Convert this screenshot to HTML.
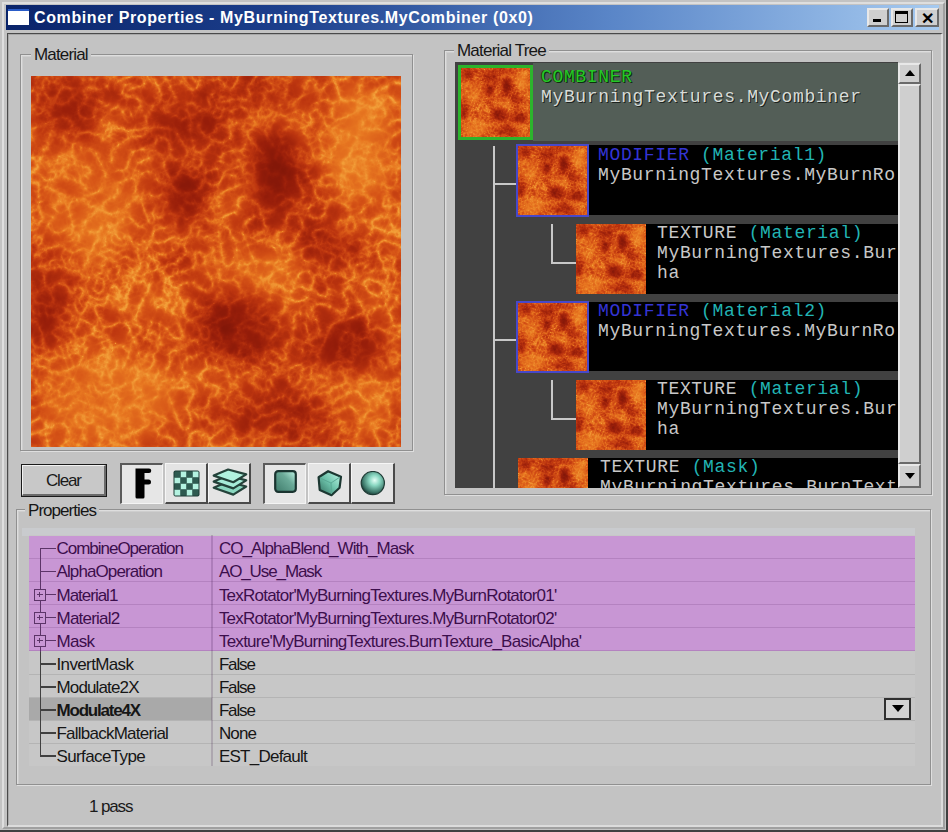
<!DOCTYPE html>
<html><head><meta charset="utf-8">
<style>
*{margin:0;padding:0;box-sizing:border-box}
html,body{width:948px;height:832px;overflow:hidden;background:#c3c3c3;font-family:"Liberation Sans",sans-serif}
.a{position:absolute}
.t{position:absolute;white-space:nowrap;font-size:17px;line-height:19px;color:#1a1a1a}
.grp{position:absolute;border:1px solid #909090;box-shadow:1px 1px 0 0 #dedede, inset 1px 1px 0 0 #dedede, inset 2px 2px 0 0 #cecece}
.lbl{position:absolute;white-space:nowrap;font-size:17px;line-height:19px;color:#161616;background:#c3c3c3;padding:0 3px}
.raised{position:absolute;background:#cfcfcf;border-top:2px solid #e8e8e8;border-left:2px solid #e8e8e8;border-right:2px solid #6a6a6a;border-bottom:2px solid #6a6a6a}
.pressed{position:absolute;background:#e6e6e6;border-top:2px solid #6a6a6a;border-left:2px solid #6a6a6a;border-right:2px solid #f2f2f2;border-bottom:2px solid #f2f2f2}
.mono{position:absolute;white-space:nowrap;font-family:"Liberation Mono",monospace;font-size:18px;line-height:20px;letter-spacing:0.65px;color:#c8c8c8}
</style></head>
<body>
<svg width="0" height="0" style="position:absolute">
<defs>
<filter id="noise" x="0" y="0" width="100%" height="100%" color-interpolation-filters="sRGB">
  <feTurbulence type="fractalNoise" baseFrequency="0.018" numOctaves="4" seed="4" result="n1"/>
  <feColorMatrix in="n1" type="matrix" values="1 0 0 0 0  1 0 0 0 0  1 0 0 0 0  0 0 0 0 1" result="a"/>
  <feTurbulence type="turbulence" baseFrequency="0.06" numOctaves="4" seed="9" result="n2"/>
  <feColorMatrix in="n2" type="matrix" values="-1 0 0 0 1  -1 0 0 0 1  -1 0 0 0 1  0 0 0 0 1"/>
  <feComponentTransfer result="b"><feFuncR type="gamma" exponent="3.5"/><feFuncG type="gamma" exponent="3.5"/><feFuncB type="gamma" exponent="3.5"/></feComponentTransfer>
  <feComposite in="a" in2="b" operator="arithmetic" k1="0" k2="0.3" k3="0.38" k4="0.32" result="c"/>
  <feColorMatrix in="c" type="matrix" values="1.8 0 0 0 -0.43  1.8 0 0 0 -0.43  1.8 0 0 0 -0.43  0 0 0 0 1"/>
</filter>
<filter id="ramp" color-interpolation-filters="sRGB">
  <feComponentTransfer>
    <feFuncR type="table" tableValues="0.45 0.60 0.74 0.84 0.91 0.95"/>
    <feFuncG type="table" tableValues="0.07 0.12 0.21 0.33 0.47 0.62"/>
    <feFuncB type="table" tableValues="0.03 0.04 0.06 0.09 0.13 0.22"/>
  </feComponentTransfer>
</filter>
<filter id="blur" x="-50%" y="-50%" width="200%" height="200%"><feGaussianBlur stdDeviation="12"/></filter>
<symbol id="tex" viewBox="0 0 370 370">
  <g transform="rotate(23 185 185)"><rect x="-90" y="-90" width="550" height="550" filter="url(#noise)"/></g>
  <g filter="url(#blur)" fill="#000">
    <ellipse cx="35" cy="32" rx="35" ry="28" opacity="0.60"/>
    <ellipse cx="155" cy="47" rx="45" ry="28" opacity="0.54"/>
    <ellipse cx="246" cy="18" rx="45" ry="16" opacity="0.42"/>
    <ellipse cx="153" cy="120" rx="22" ry="36" opacity="0.72"/>
    <ellipse cx="244" cy="95" rx="28" ry="46" opacity="0.84"/>
    <ellipse cx="302" cy="168" rx="30" ry="18" opacity="0.66"/>
    <ellipse cx="15" cy="236" rx="20" ry="40" opacity="0.72"/>
    <ellipse cx="206" cy="249" rx="45" ry="38" opacity="0.66"/>
    <ellipse cx="318" cy="272" rx="45" ry="25" opacity="0.66"/>
    <ellipse cx="242" cy="338" rx="70" ry="28" opacity="0.42"/>
  </g>
  <g filter="url(#blur)" fill="#fff">
    <ellipse cx="330" cy="70" rx="38" ry="60" opacity="0.54"/>
    <ellipse cx="60" cy="130" rx="55" ry="65" opacity="0.36"/>
    <ellipse cx="80" cy="322" rx="75" ry="45" opacity="0.48"/>
    <ellipse cx="216" cy="188" rx="55" ry="22" opacity="0.30"/>
    <ellipse cx="346" cy="332" rx="25" ry="35" opacity="0.36"/>
  </g>
</symbol>
<filter id="noise2" x="0" y="0" width="100%" height="100%" color-interpolation-filters="sRGB">
  <feTurbulence type="fractalNoise" baseFrequency="0.02" numOctaves="4" seed="21" result="n1"/>
  <feColorMatrix in="n1" type="matrix" values="1.7 0 0 0 -0.32  1.7 0 0 0 -0.32  1.7 0 0 0 -0.32  0 0 0 0 1"/>
</filter>
<symbol id="tex2" viewBox="0 0 370 370">
  <rect width="370" height="370" filter="url(#noise2)"/>
</symbol>
</defs>
</svg>

<!-- window frame -->
<div class="a" style="left:0;top:0;width:948px;height:832px;border-right:2px solid #404040;border-bottom:2px solid #404040;"></div>
<div class="a" style="left:2px;top:2px;width:943px;height:827px;border-right:2px solid #a0a0a0;border-bottom:2px solid #a0a0a0;border-left:2px solid #dedede;border-top:2px solid #dedede"></div>
<!-- title bar -->
<div class="a" style="left:6px;top:5px;width:933px;height:25px;background:linear-gradient(90deg,#0a246a 0%,#1c3f8c 30%,#5a86c8 65%,#a6caf0 100%)"></div>
<div class="a" style="left:8px;top:9px;width:21px;height:16px;background:#fff;border-top:2px solid #2a5cc8"></div>
<div class="t" style="left:34px;top:9px;font-weight:bold;font-size:16px;line-height:17px;color:#fff;letter-spacing:0.62px">Combiner Properties - MyBurningTextures.MyCombiner (0x0)</div>
<!-- title buttons -->
<div class="raised" style="left:867px;top:8px;width:22px;height:19px;"><div class="a" style="left:4px;top:9px;width:8px;height:3px;background:#000"></div></div>
<div class="raised" style="left:891px;top:8px;width:22px;height:19px;"><div class="a" style="left:2px;top:1px;width:13px;height:12px;border:1.5px solid #000;border-top-width:3px"></div></div>
<div class="raised" style="left:915px;top:8px;width:24px;height:19px;"><div class="a" style="left:4px;top:1px;font:bold 16px/16px 'Liberation Sans';color:#000">&#x2715;</div></div>

<!-- client sunken border -->
<div class="a" style="left:7px;top:33px;width:936px;height:794px;border-top:1px solid #4a4a4a;border-left:1px solid #4a4a4a;border-right:2px solid #dcdcdc;border-bottom:2px solid #dcdcdc;box-shadow:inset 1px 1px 0 #a8a8a8"></div>

<!-- Material group -->
<div class="grp" style="left:20px;top:54px;width:393px;height:397px"></div>
<div class="lbl" style="left:31px;top:45px;letter-spacing:-0.85px">Material</div>
<div class="a" style="left:31px;top:76px;width:370px;height:371px;filter:url(#ramp)"><svg width="370" height="371" style="display:block"><use href="#tex" width="370" height="371"/></svg></div>

<!-- Material Tree group -->
<div class="grp" style="left:444px;top:50px;width:488px;height:445px"></div>
<div class="lbl" style="left:454px;top:41px;letter-spacing:-0.79px">Material Tree</div>
<div class="a" id="tree" style="left:455px;top:62px;width:466px;height:426px;background:#414141;overflow:hidden">
<div class="a" style="left:78px;top:1px;width:365px;height:78px;background:#535e57"></div>
<div class="a" style="left:3px;top:3px;width:75px;height:75px;border:3px solid #2cb42c;overflow:hidden"><div class="a" style="left:0;top:0;width:69px;height:69px;filter:url(#ramp) blur(0.6px)"><svg width="69" height="69" style="display:block"><use href="#tex" width="69" height="69"/></svg></div></div>
<div class="mono" style="left:86px;top:5px;text-shadow:1px 1px 0 #1c221e;color:#d8dcd8"><span style="color:#26c826;text-shadow:1px 1px 0 #0c300c,-1px 0 0 #1a3a1a">COMBINER</span><br>MyBurningTextures.MyCombiner</div>
<div class="a" style="left:38px;top:84px;width:2px;height:342px;background:#c8c8c8"></div>
<div class="a" style="left:40px;top:121px;width:21px;height:2px;background:#c8c8c8"></div>
<div class="a" style="left:134px;top:83px;width:309px;height:70px;background:#000"></div>
<div class="a" style="left:61px;top:82px;width:73px;height:73px;border:2px solid #4848c8;overflow:hidden"><div class="a" style="left:0;top:0;width:69px;height:69px;filter:url(#ramp) blur(0.6px)"><svg width="69" height="69" style="display:block"><use href="#tex" width="69" height="69"/></svg></div></div>
<div class="mono" style="left:143px;top:83px;"><span style="color:#3434d4">MODIFIER</span> <span style="color:#22b4b4">(Material1)</span><br>MyBurningTextures.MyBurnRo</div>
<div class="a" style="left:96px;top:162px;width:2px;height:40px;background:#c8c8c8"></div>
<div class="a" style="left:98px;top:200px;width:23px;height:2px;background:#c8c8c8"></div>
<div class="a" style="left:191px;top:162px;width:252px;height:70px;background:#000"></div>
<div class="a" style="left:121px;top:162px;width:70px;height:70px;overflow:hidden"><div class="a" style="left:0;top:0;width:70px;height:70px;filter:url(#ramp) blur(0.6px)"><svg width="70" height="70" style="display:block"><use href="#tex" width="70" height="70"/></svg></div></div>
<div class="mono" style="left:202px;top:161px;">TEXTURE <span style="color:#22b4b4">(Material)</span><br>MyBurningTextures.Bur<br>ha</div>
<div class="a" style="left:40px;top:277px;width:21px;height:2px;background:#c8c8c8"></div>
<div class="a" style="left:134px;top:240px;width:309px;height:69px;background:#000"></div>
<div class="a" style="left:61px;top:239px;width:73px;height:72px;border:2px solid #4848c8;overflow:hidden"><div class="a" style="left:0;top:0;width:69px;height:68px;filter:url(#ramp) blur(0.6px)"><svg width="69" height="68" style="display:block"><use href="#tex" width="69" height="68"/></svg></div></div>
<div class="mono" style="left:143px;top:239px;"><span style="color:#3434d4">MODIFIER</span> <span style="color:#22b4b4">(Material2)</span><br>MyBurningTextures.MyBurnRo</div>
<div class="a" style="left:96px;top:318px;width:2px;height:40px;background:#c8c8c8"></div>
<div class="a" style="left:98px;top:356px;width:23px;height:2px;background:#c8c8c8"></div>
<div class="a" style="left:191px;top:318px;width:252px;height:70px;background:#000"></div>
<div class="a" style="left:121px;top:318px;width:70px;height:70px;overflow:hidden"><div class="a" style="left:0;top:0;width:70px;height:70px;filter:url(#ramp) blur(0.6px)"><svg width="70" height="70" style="display:block"><use href="#tex" width="70" height="70"/></svg></div></div>
<div class="mono" style="left:202px;top:317px;">TEXTURE <span style="color:#22b4b4">(Material)</span><br>MyBurningTextures.Bur<br>ha</div>
<div class="a" style="left:133px;top:396px;width:310px;height:72px;background:#000"></div>
<div class="a" style="left:63px;top:396px;width:70px;height:70px;overflow:hidden"><div class="a" style="left:0;top:0;width:70px;height:70px;filter:url(#ramp) blur(0.6px)"><svg width="70" height="70" style="display:block"><use href="#tex" width="70" height="70"/></svg></div></div>
<div class="mono" style="left:145px;top:395px;">TEXTURE <span style="color:#22b4b4">(Mask)</span><br>MyBurningTextures.BurnText</div>
<div class="a" style="left:443px;top:0px;width:23px;height:426px;background:#c8c8c8"></div>
<div class="raised" style="left:443px;top:1px;width:23px;height:21px"><div class="a" style="left:5px;top:5px;width:0;height:0;border-left:5px solid transparent;border-right:5px solid transparent;border-bottom:6px solid #000"></div></div>
<div class="raised" style="left:443px;top:22px;width:23px;height:380px"></div>
<div class="raised" style="left:443px;top:402px;width:23px;height:24px"><div class="a" style="left:5px;top:7px;width:0;height:0;border-left:5px solid transparent;border-right:5px solid transparent;border-top:6px solid #000"></div></div>
</div>

<!-- Buttons row -->
<div class="a" style="left:21px;top:464px;width:86px;height:33px;border:1px solid #1a1a1a;background:#c8c8c8">
  <div class="a" style="left:0;top:0;width:84px;height:31px;border-top:1px solid #f2f2f2;border-left:1px solid #f2f2f2;border-right:2px solid #6a6a6a;border-bottom:2px solid #6a6a6a"></div>
</div>
<div class="t" style="left:46px;top:471px;letter-spacing:-1.16px">Clear</div>
<!-- toolbar buttons -->
<div class="a" style="left:120px;top:463px;width:43px;height:41px;background:#e6e6e6;border-top:2px solid #5a5a5a;border-left:2px solid #5a5a5a;border-right:1px solid #f4f4f4;border-bottom:1px solid #f4f4f4"></div>
<svg class="a" style="left:134px;top:467px" width="18" height="33"><path d="M1.5 1.5 H15 a1.5 1.5 0 0 1 0 4.5 H10.5 V12.5 H14.5 a1.5 1.5 0 0 1 0 5 H10.5 V30 a1.5 1.5 0 0 1 -1.5 1.5 H3 a1.5 1.5 0 0 1 -1.5 -1.5 Z" fill="#000"/></svg>

<div class="a" style="left:165px;top:463px;width:43px;height:41px;background:#e4e4e4;border-top:1px solid #f6f6f6;border-left:1px solid #f6f6f6;border-right:2px solid #4a4a4a;border-bottom:2px solid #4a4a4a"></div>
<svg class="a" style="left:173px;top:470px" width="27" height="27" viewBox="0 0 27 27">
<rect x="0.5" y="0.5" width="26" height="26" rx="2" fill="#1c3a34"/>
<g fill="#b4f2e0"><rect x="7.5" y="1.5" width="6" height="6"/><rect x="19.5" y="1.5" width="6" height="6"/><rect x="1.5" y="7.5" width="6" height="6"/><rect x="13.5" y="7.5" width="6" height="6"/><rect x="7.5" y="13.5" width="6" height="6"/><rect x="19.5" y="13.5" width="6" height="6"/><rect x="1.5" y="19.5" width="6" height="6"/><rect x="13.5" y="19.5" width="6" height="6"/></g>
<g fill="#2e5a50"><rect x="1.5" y="1.5" width="6" height="6"/><rect x="13.5" y="1.5" width="6" height="6"/><rect x="7.5" y="7.5" width="6" height="6"/><rect x="19.5" y="7.5" width="6" height="6"/><rect x="1.5" y="13.5" width="6" height="6"/><rect x="13.5" y="13.5" width="6" height="6"/><rect x="7.5" y="19.5" width="6" height="6"/><rect x="19.5" y="19.5" width="6" height="6"/></g>
</svg>

<div class="a" style="left:208px;top:463px;width:43px;height:41px;background:#e4e4e4;border-top:1px solid #f6f6f6;border-left:1px solid #f6f6f6;border-right:2px solid #4a4a4a;border-bottom:2px solid #4a4a4a"></div>
<svg class="a" style="left:208px;top:463px" width="43" height="41" viewBox="208 463 43 41">
<g stroke="#24423a" stroke-width="2.2" stroke-linejoin="round">
<path d="M213.7 487.7 L228.1 481.6 L246.2 486.5 L233.3 494.6 Z" fill="#8ad8c0"/>
<path d="M213.7 481.6 L228.1 475.5 L246.2 480.4 L233.3 488.4 Z" fill="#a6ecd8"/>
<path d="M213.7 475.6 L228.1 469.5 L246.2 474.4 L233.3 482.2 Z" fill="#b0f2de"/>
</g>
</svg>

<div class="a" style="left:263px;top:463px;width:43px;height:41px;background:#e6e6e6;border-top:2px solid #5a5a5a;border-left:2px solid #5a5a5a;border-right:1px solid #f4f4f4;border-bottom:1px solid #f4f4f4"></div>
<svg class="a" style="left:274px;top:470px" width="23" height="23" viewBox="0 0 23 23">
<defs><linearGradient id="gsq" x1="0" y1="1" x2="1" y2="0"><stop offset="0" stop-color="#3e7a6a"/><stop offset="0.6" stop-color="#6aaa98"/><stop offset="1" stop-color="#c0f6e6"/></linearGradient></defs>
<rect x="1.2" y="1.2" width="20.6" height="20.6" rx="3" fill="url(#gsq)" stroke="#1a3430" stroke-width="2.2"/>
</svg>

<div class="a" style="left:308px;top:463px;width:43px;height:41px;background:#e4e4e4;border-top:1px solid #f6f6f6;border-left:1px solid #f6f6f6;border-right:2px solid #4a4a4a;border-bottom:2px solid #4a4a4a"></div>
<svg class="a" style="left:308px;top:463px" width="43" height="41" viewBox="308 463 43 41">
<defs><linearGradient id="gcb" x1="0" y1="1" x2="1" y2="0"><stop offset="0" stop-color="#2e6a5a"/><stop offset="0.5" stop-color="#6ec4ac"/><stop offset="1" stop-color="#c4faea"/></linearGradient></defs>
<path d="M328.1 471.2 L341 476.7 L339.6 487.7 L331.5 495.2 L319.7 490 L318.6 477.3 Z" fill="url(#gcb)" stroke="#1c3832" stroke-width="2.2" stroke-linejoin="round"/>
<path d="M320 478 L331 483 L340 477 M331 483 L331.5 494" fill="none" stroke="#5aa894" stroke-width="1"/>
</svg>

<div class="a" style="left:351px;top:463px;width:44px;height:41px;background:#e4e4e4;border-top:1px solid #f6f6f6;border-left:1px solid #f6f6f6;border-right:2px solid #4a4a4a;border-bottom:2px solid #4a4a4a"></div>
<svg class="a" style="left:360px;top:471px" width="26" height="26" viewBox="0 0 26 26">
<defs><radialGradient id="gsp" cx="0.58" cy="0.38" r="0.65"><stop offset="0" stop-color="#e4fff6"/><stop offset="0.35" stop-color="#8ad8c2"/><stop offset="0.8" stop-color="#3a7466"/><stop offset="1" stop-color="#1a3430"/></radialGradient></defs>
<circle cx="12.8" cy="12.1" r="11.6" fill="url(#gsp)" stroke="#1e3a34" stroke-width="1.2"/>
</svg>

<!-- Properties group -->
<div class="grp" style="left:16px;top:509px;width:915px;height:276px"></div>
<div class="lbl" style="left:25px;top:501px;letter-spacing:-0.95px">Properties</div>
<div class="a" style="left:22px;top:528px;width:893px;height:8px;background:#c9cbce"></div>
<div class="a" id="grid" style="left:29px;top:535px;width:886px;height:231px;background:#c7c7c7;overflow:hidden">
<div class="a" style="left:0;top:1.0px;width:886px;height:23.1px;background:#c896d4;border-bottom:1.5px solid #b482c0"></div>
<div class="a" style="left:0;top:24.1px;width:886px;height:23.1px;background:#c896d4;border-bottom:1.5px solid #b482c0"></div>
<div class="a" style="left:0;top:47.2px;width:886px;height:23.1px;background:#c896d4;border-bottom:1.5px solid #b482c0"></div>
<div class="a" style="left:0;top:70.3px;width:886px;height:23.1px;background:#c896d4;border-bottom:1.5px solid #b482c0"></div>
<div class="a" style="left:0;top:93.4px;width:886px;height:23.1px;background:#c896d4;border-bottom:1.5px solid #b482c0"></div>
<div class="a" style="left:0;top:116.5px;width:886px;height:23.1px;background:#c7c7c7;border-bottom:1.5px solid #b4b4b4"></div>
<div class="a" style="left:0;top:139.6px;width:886px;height:23.1px;background:#c7c7c7;border-bottom:1.5px solid #b4b4b4"></div>
<div class="a" style="left:0;top:162.7px;width:886px;height:23.1px;background:#c7c7c7;border-bottom:1.5px solid #b4b4b4"></div>
<div class="a" style="left:0;top:162.7px;width:183px;height:23.1px;background:#a9a9a9;border-bottom:1.5px solid #b4b4b4"></div>
<div class="a" style="left:0;top:185.8px;width:886px;height:23.1px;background:#c7c7c7;border-bottom:1.5px solid #b4b4b4"></div>
<div class="a" style="left:0;top:208.9px;width:886px;height:23.1px;background:#c7c7c7;border-bottom:1.5px solid #b4b4b4"></div>
<div class="a" style="left:10.5px;top:12.5px;width:1.5px;height:104.0px;background:#5c3468"></div>
<div class="a" style="left:10.5px;top:116.5px;width:1.5px;height:105.5px;background:#404040"></div>
<div class="t" style="left:27.5px;top:4.3px;color:#3c0e4c;letter-spacing:-1.02px;">CombineOperation</div>
<div class="t" style="left:189.9px;top:4.3px;color:#3c0e4c;letter-spacing:-0.91px">CO_AlphaBlend_With_Mask</div>
<div class="a" style="left:11px;top:12.5px;width:16px;height:1.5px;background:#5c3468"></div>
<div class="t" style="left:27.5px;top:27.4px;color:#3c0e4c;letter-spacing:-0.89px;">AlphaOperation</div>
<div class="t" style="left:189.9px;top:27.4px;color:#3c0e4c;letter-spacing:-1.1px">AO_Use_Mask</div>
<div class="a" style="left:11px;top:35.6px;width:16px;height:1.5px;background:#5c3468"></div>
<div class="t" style="left:27.5px;top:50.5px;color:#3c0e4c;letter-spacing:-1.01px;">Material1</div>
<div class="t" style="left:189.9px;top:50.5px;color:#3c0e4c;letter-spacing:-0.77px">TexRotator'MyBurningTextures.MyBurnRotator01'</div>
<div class="a" style="left:11px;top:58.7px;width:16px;height:1.5px;background:#5c3468"></div>
<div class="a" style="left:5px;top:53.7px;width:12px;height:12px;border:1.3px solid #5c3468;background:#c896d4"><div class="a" style="left:2px;top:4.2px;width:5.5px;height:1.3px;background:#5c3468"></div><div class="a" style="left:4.1px;top:2px;width:1.3px;height:5.5px;background:#5c3468"></div></div>
<div class="t" style="left:27.5px;top:73.6px;color:#3c0e4c;letter-spacing:-0.78px;">Material2</div>
<div class="t" style="left:189.9px;top:73.6px;color:#3c0e4c;letter-spacing:-0.77px">TexRotator'MyBurningTextures.MyBurnRotator02'</div>
<div class="a" style="left:11px;top:81.8px;width:16px;height:1.5px;background:#5c3468"></div>
<div class="a" style="left:5px;top:76.8px;width:12px;height:12px;border:1.3px solid #5c3468;background:#c896d4"><div class="a" style="left:2px;top:4.2px;width:5.5px;height:1.3px;background:#5c3468"></div><div class="a" style="left:4.1px;top:2px;width:1.3px;height:5.5px;background:#5c3468"></div></div>
<div class="t" style="left:27.5px;top:96.7px;color:#3c0e4c;letter-spacing:-0.7px;">Mask</div>
<div class="t" style="left:189.9px;top:96.7px;color:#3c0e4c;letter-spacing:-0.74px">Texture'MyBurningTextures.BurnTexture_BasicAlpha'</div>
<div class="a" style="left:11px;top:104.9px;width:16px;height:1.5px;background:#5c3468"></div>
<div class="a" style="left:5px;top:99.9px;width:12px;height:12px;border:1.3px solid #5c3468;background:#c896d4"><div class="a" style="left:2px;top:4.2px;width:5.5px;height:1.3px;background:#5c3468"></div><div class="a" style="left:4.1px;top:2px;width:1.3px;height:5.5px;background:#5c3468"></div></div>
<div class="t" style="left:27.5px;top:119.8px;color:#161616;letter-spacing:-0.63px;">InvertMask</div>
<div class="t" style="left:189.9px;top:119.8px;color:#161616;letter-spacing:-1.15px">False</div>
<div class="a" style="left:11px;top:128.0px;width:16px;height:1.5px;background:#404040"></div>
<div class="t" style="left:27.5px;top:142.9px;color:#161616;letter-spacing:-0.86px;">Modulate2X</div>
<div class="t" style="left:189.9px;top:142.9px;color:#161616;letter-spacing:-1.15px">False</div>
<div class="a" style="left:11px;top:151.1px;width:16px;height:1.5px;background:#404040"></div>
<div class="t" style="left:27.5px;top:166.0px;color:#161616;letter-spacing:-1.19px;font-weight:bold;">Modulate4X</div>
<div class="t" style="left:189.9px;top:166.0px;color:#161616;letter-spacing:-1.15px">False</div>
<div class="a" style="left:11px;top:174.2px;width:16px;height:1.5px;background:#404040"></div>
<div class="t" style="left:27.5px;top:189.1px;color:#161616;letter-spacing:-0.76px;">FallbackMaterial</div>
<div class="t" style="left:189.9px;top:189.1px;color:#161616;letter-spacing:-0.86px">None</div>
<div class="a" style="left:11px;top:197.3px;width:16px;height:1.5px;background:#404040"></div>
<div class="t" style="left:27.5px;top:212.2px;color:#161616;letter-spacing:-0.62px;">SurfaceType</div>
<div class="t" style="left:189.9px;top:212.2px;color:#161616;letter-spacing:-0.75px">EST_Default</div>
<div class="a" style="left:11px;top:220.4px;width:16px;height:1.5px;background:#404040"></div>
<div class="a" style="left:182px;top:0;width:1.5px;height:231px;background:rgba(40,0,50,0.16)"></div>
<div class="a" style="left:855px;top:163px;width:27px;height:22px;border:2px solid #303030;background:#d4d4d4"><div class="a" style="left:6px;top:5px;width:0;height:0;border-left:6px solid transparent;border-right:6px solid transparent;border-top:7px solid #000"></div></div>
</div>

<!-- status -->
<div class="t" style="left:89px;top:797px;letter-spacing:-1.13px">1 pass</div>

</body></html>
